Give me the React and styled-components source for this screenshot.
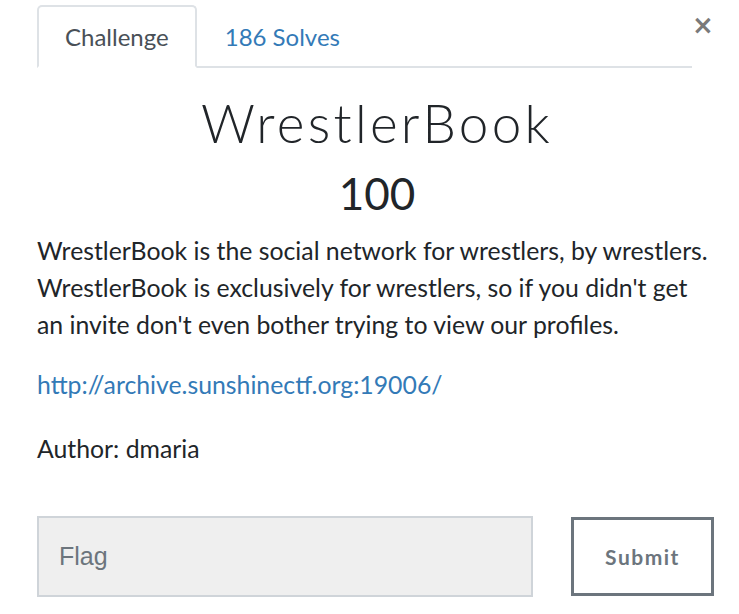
import styled, { createGlobalStyle } from "styled-components"

const Global = createGlobalStyle`
body{
margin:0;
background:#fff;
font-family:Lato, "Open Sans", sans-serif;
color:#212529;
}
`

const Modal = styled.div`
padding:5px 22px 0 37px;
`
const Header = styled.div`
display:flex;
align-items:flex-start;
`
const Tabs = styled.div`
flex:1;
display:flex;
border-bottom:2px solid #dee2e6;
`
const Tab = styled.div`
height:63px;
box-sizing:border-box;
padding:0 26px;
display:flex;
align-items:center;
font-size:24px;
margin-bottom:-2px;
border:2px solid ${p => p.active ? "#dee2e6" : "transparent"};
border-bottom:2px solid ${p => p.active ? "#fff" : "transparent"};
border-radius:5px 5px 0 0;
color:${p => p.active ? "#495057" : "#337ab7"};
background:${p => p.active ? "#fff" : "transparent"};
`
const Close = styled.button`
width:25px;
margin:7px 0 0 0;
padding:0;
background:none;
border:none;
color:#7a7a7a;
font-family:"DejaVu Sans", sans-serif;
font-weight:bold;
font-size:26px;
line-height:1;
text-align:left;
`
const Body = styled.div`
display:flex;
flex-direction:column;
`
const Title = styled.h1`
margin:23px 0 0;
text-align:center;
font-family:Lato, sans-serif;
font-weight:300;
font-size:53px;
letter-spacing:3.3px;
line-height:1.2;
`
const Points = styled.div`
text-align:center;
font-size:44px;
line-height:1.2;
margin-top:12px;
`
const Text = styled.p`
margin:${p => p.top || 0}px 0 0;
font-size:24.8px;
line-height:37px;
`
const Link = styled.a`
color:#337ab7;
text-decoration:none;
`
const Form = styled.div`
display:flex;
gap:38px;
margin-top:49px;
padding-right:3px;
align-items:center;
`
const Input = styled.input`
flex:1;
height:81px;
box-sizing:border-box;
background:#efefef;
border:2px solid #cfd4d9;
padding:0 20px;
font-family:"Liberation Sans", Arial, sans-serif;
font-size:25px;
&::placeholder{
color:#6c757d;
}
`
const Submit = styled.button`
width:143px;
height:79px;
box-sizing:border-box;
background:#fff;
border:3px solid #6c757d;
color:#6c757d;
font-family:Lato, sans-serif;
font-weight:bold;
font-size:21px;
letter-spacing:1.5px;
`

export default function App() {
    return (
        <Modal>
            <Global />
            <Header>
                <Tabs>
                    <Tab active>Challenge</Tab>
                    <Tab>186 Solves</Tab>
                </Tabs>
                <Close>×</Close>
            </Header>
            <Body>
                <Title>WrestlerBook</Title>
                <Points>100</Points>
                <Text top={13}>WrestlerBook is the social network for wrestlers, by wrestlers. WrestlerBook is exclusively for wrestlers, so if you didn't get an invite don't even bother trying to view our profiles.</Text>
                <Text top={23}><Link href="#">http://archive.sunshinectf.org:19006/</Link></Text>
                <Text top={27}>Author: dmaria</Text>
                <Form>
                    <Input placeholder="Flag" />
                    <Submit>Submit</Submit>
                </Form>
            </Body>
        </Modal>
    )
}
